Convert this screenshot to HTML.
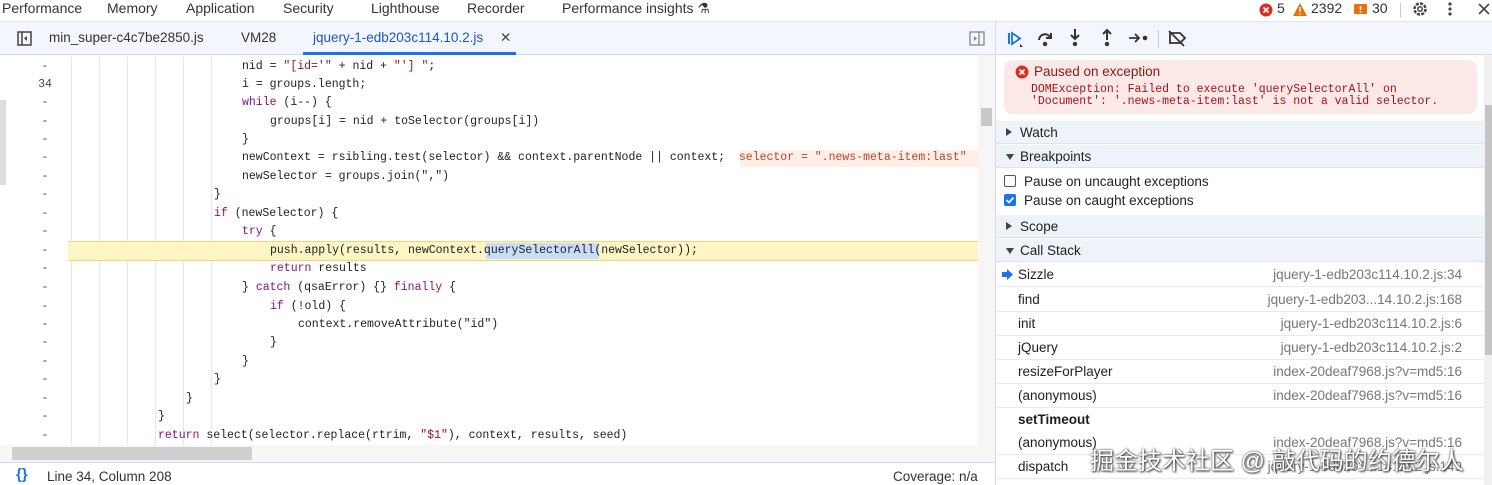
<!DOCTYPE html>
<html><head><meta charset="utf-8"><style>
*{margin:0;padding:0;box-sizing:border-box}
body{width:1492px;height:485px;overflow:hidden;background:#fff;font-family:"Liberation Sans","Noto Sans CJK SC",sans-serif;font-size:13px;color:#1f1f1f;position:relative}
.abs{position:absolute}
#top{left:0;top:0;width:1492px;height:22px;background:#fff;border-bottom:1px solid #e0e3e8}
#top span{position:absolute;top:0;font-size:14px;color:#333}
#tabs{left:0;top:22px;width:995px;height:33px;background:#f3f6fc;border-bottom:1px solid #d6dbe3}
#tabs span{position:absolute;top:8px;font-size:13.5px;color:#333}
#dbg{left:995px;top:22px;width:497px;height:33px;background:#f3f6fc;border-bottom:1px solid #d6dbe3;border-left:1px solid #d6dbe3}
#editor{left:0;top:57px;width:978px;height:388px;overflow:hidden}
.ln{position:absolute;left:20px;width:50px;text-align:center;font-family:"Liberation Mono",monospace;font-size:11.5px;color:#444}
.code{position:absolute;font-family:"Liberation Mono",monospace;font-size:11.5px;color:#222;white-space:pre}
.guide{position:absolute;top:0;width:1px;height:390px;background:#e6e6e6}
.kw{color:#881280}.str{color:#a31515}
#right{left:995px;top:55px;width:497px;height:430px;border-left:1px solid #d6dbe3;background:#fff}
.sec{position:absolute;left:0;width:488px;height:23px;background:#eef2f9;border-bottom:1px solid #dde3ee;font-size:13.5px;padding:4px 0 0 24px}
.tri{position:absolute;left:10px;top:8px;width:0;height:0}
.row{position:absolute;left:0;width:488px;height:24px;border-bottom:1px solid #e8eaed;font-size:13.5px}
.row .n{position:absolute;left:22px;top:4px}
.row .f{position:absolute;right:22px;top:4px;color:#777}
</style></head><body>
<div id="top" class="abs">
<span style="left:2px">Performance</span><span style="left:107px">Memory</span><span style="left:186px">Application</span><span style="left:283px">Security</span><span style="left:371px">Lighthouse</span><span style="left:467px">Recorder</span><span style="left:562px">Performance insights ⚗</span>
<svg class="abs" style="left:1259px;top:3px" width="14" height="14"><circle cx="7" cy="7" r="6.5" fill="#d93025"/><path d="M4.5 4.5l5 5M9.5 4.5l-5 5" stroke="#fff" stroke-width="1.6"/></svg>
<span style="left:1277px">5</span>
<svg class="abs" style="left:1293px;top:3px" width="14" height="13"><path d="M7 0L14 13H0z" fill="#e8710a"/><path d="M7 4v5M7 10.5v1.2" stroke="#fff" stroke-width="1.5"/></svg>
<span style="left:1311px">2392</span>
<svg class="abs" style="left:1354px;top:4px" width="13" height="12"><rect width="13" height="10" rx="1" fill="#e8710a"/><path d="M6.5 2v4M6.5 7v1.5" stroke="#fff" stroke-width="1.5"/></svg>
<span style="left:1372px">30</span>
<div class="abs" style="left:1400px;top:2px;width:1px;height:16px;background:#ccc"></div>
<svg class="abs" style="left:1411px;top:0px" width="18" height="18"><circle cx="9" cy="9" r="5.5" fill="none" stroke="#444" stroke-width="2.5" stroke-dasharray="3 1.3"/><circle cx="9" cy="9" r="2.2" fill="none" stroke="#444" stroke-width="1.5"/></svg>
<svg class="abs" style="left:1447px;top:1px" width="6" height="16"><circle cx="3" cy="3" r="1.6" fill="#444"/><circle cx="3" cy="8" r="1.6" fill="#444"/><circle cx="3" cy="13" r="1.6" fill="#444"/></svg>
<svg class="abs" style="left:1478px;top:3px" width="12" height="12"><path d="M1 1l10 10M11 1L1 11" stroke="#444" stroke-width="1.6"/></svg>
</div>
<div id="tabs" class="abs">
<svg class="abs" style="left:17px;top:9px" width="15" height="15"><rect x="1" y="1" width="13" height="13" fill="none" stroke="#444" stroke-width="1.5"/><path d="M5 1v13" stroke="#444" stroke-width="1.5"/><path d="M10 5l-3 2.5 3 2.5z" fill="#444"/></svg>
<span style="left:49px">min_super-c4c7be2850.js</span>
<span style="left:241px">VM28</span>
<span style="left:313px;color:#1a57c9">jquery-1-edb203c114.10.2.js</span>
<span style="left:500px;color:#444">✕</span>
<div class="abs" style="left:303px;top:30px;width:213px;height:3px;background:#1a73e8"></div>
<svg class="abs" style="left:969px;top:9px" width="16" height="15"><rect x="1" y="1" width="14" height="13" fill="none" stroke="#888" stroke-width="1.3"/><path d="M10 1v13" stroke="#888" stroke-width="1.3"/><path d="M5 5l3 2.5-3 2.5z" fill="#888"/></svg>
</div>
<div id="dbg" class="abs">
<svg class="abs" style="left:10px;top:8px" width="18" height="18"><path d="M3 3v11" stroke="#1a73e8" stroke-width="2"/><path d="M6 3l8 5.5-8 5.5z" fill="none" stroke="#1a73e8" stroke-width="1.8"/><path d="M14 14l3 3h-3z" fill="#333"/></svg>
<svg class="abs" style="left:40px;top:8px" width="18" height="18"><path d="M3 10a6 6 0 0 1 11-3" fill="none" stroke="#333" stroke-width="2"/><path d="M15 3v5h-5" fill="none" stroke="#333" stroke-width="2"/><circle cx="9" cy="14" r="2.2" fill="#333"/></svg>
<svg class="abs" style="left:72px;top:6px" width="14" height="20"><path d="M7 1v10M3 7l4 4 4-4" fill="none" stroke="#333" stroke-width="2"/><circle cx="7" cy="16" r="2.2" fill="#333"/></svg>
<svg class="abs" style="left:104px;top:6px" width="14" height="20"><path d="M7 12V2M3 6l4-4 4 4" fill="none" stroke="#333" stroke-width="2"/><circle cx="7" cy="16" r="2.2" fill="#333"/></svg>
<svg class="abs" style="left:132px;top:8px" width="22" height="16"><path d="M1 8h10M7 4l4 4-4 4" fill="none" stroke="#333" stroke-width="1.8"/><circle cx="17" cy="8" r="2.3" fill="#333"/></svg>
<div class="abs" style="left:162px;top:8px;width:1px;height:18px;background:#ccc"></div>
<svg class="abs" style="left:171px;top:7px" width="20" height="18"><path d="M3 4h10l5 5-5 5H3z" fill="none" stroke="#333" stroke-width="1.8"/><path d="M2 2l15 15" stroke="#333" stroke-width="1.8"/></svg>
</div>
<div id="editor" class="abs">
<div class="guide" style="left:71px"></div><div class="guide" style="left:99px"></div><div class="guide" style="left:127px"></div><div class="guide" style="left:155px"></div><div class="guide" style="left:183px"></div><div class="guide" style="left:211px"></div>
<div class="abs" style="left:68px;top:184px;width:910px;height:20px;background:#fdf6c4;border-top:1px solid #f0d878;border-bottom:1px solid #f0d878"></div>
<div class="abs" style="left:486px;top:186px;width:113px;height:16px;background:#c9ddf7"></div>
<div class="abs" style="left:740px;top:93px;width:240px;height:17px;background:#fdeee6"></div>
<div class="ln" style="top:3px">-</div><div class="code" style="left:242px;top:3px">nid = <span class="str">"[id='"</span> + nid + <span class="str">"'] "</span>;</div>
<div class="ln" style="top:21px">34</div><div class="code" style="left:242px;top:21px">i = groups.length;</div>
<div class="ln" style="top:39px">-</div><div class="code" style="left:242px;top:39px"><span class="kw">while</span> (i--) {</div>
<div class="ln" style="top:58px">-</div><div class="code" style="left:270px;top:58px">groups[i] = nid + toSelector(groups[i])</div>
<div class="ln" style="top:76px">-</div><div class="code" style="left:242px;top:76px">}</div>
<div class="ln" style="top:94px">-</div><div class="code" style="left:242px;top:94px">newContext = rsibling.test(selector) &amp;&amp; context.parentNode || context;  <span style="color:#b5462a">selector = ".news-meta-item:last"</span></div>
<div class="ln" style="top:113px">-</div><div class="code" style="left:242px;top:113px">newSelector = groups.join(",")</div>
<div class="ln" style="top:131px">-</div><div class="code" style="left:214px;top:131px">}</div>
<div class="ln" style="top:150px">-</div><div class="code" style="left:214px;top:150px"><span class="kw">if</span> (newSelector) {</div>
<div class="ln" style="top:168px">-</div><div class="code" style="left:242px;top:168px"><span class="kw">try</span> {</div>
<div class="ln" style="top:187px">-</div><div class="code" style="left:270px;top:187px">push.apply(results, newContext.querySelectorAll(newSelector));</div>
<div class="ln" style="top:205px">-</div><div class="code" style="left:270px;top:205px"><span class="kw">return</span> results</div>
<div class="ln" style="top:224px">-</div><div class="code" style="left:242px;top:224px">} <span class="kw">catch</span> (qsaError) {} <span class="kw">finally</span> {</div>
<div class="ln" style="top:243px">-</div><div class="code" style="left:270px;top:243px"><span class="kw">if</span> (!old) {</div>
<div class="ln" style="top:261px">-</div><div class="code" style="left:298px;top:261px">context.removeAttribute("id")</div>
<div class="ln" style="top:279px">-</div><div class="code" style="left:270px;top:279px">}</div>
<div class="ln" style="top:298px">-</div><div class="code" style="left:242px;top:298px">}</div>
<div class="ln" style="top:316px">-</div><div class="code" style="left:214px;top:316px">}</div>
<div class="ln" style="top:335px">-</div><div class="code" style="left:186px;top:335px">}</div>
<div class="ln" style="top:353px">-</div><div class="code" style="left:158px;top:353px">}</div>
<div class="ln" style="top:372px">-</div><div class="code" style="left:158px;top:372px"><span class="kw">return</span> select(selector.replace(rtrim, <span class="str">"$1"</span>), context, results, seed)</div>
</div>
<div class="abs" style="left:0;top:100px;width:6px;height:85px;background:#ddd"></div>
<div class="abs" style="left:978px;top:55px;width:17px;height:390px;background:#f6f6f6"></div>
<div class="abs" style="left:981px;top:108px;width:11px;height:18px;background:#c8c8c8"></div>
<div class="abs" style="left:0;top:445px;width:995px;height:17px;background:#f6f6f6"></div>
<div class="abs" style="left:12px;top:447px;width:240px;height:13px;background:#cfcfcf"></div>
<div class="abs" style="left:0;top:462px;width:995px;height:23px;background:#fff;border-top:1px solid #d6dbe3"></div>
<div class="abs" style="left:16px;top:466px;font-size:15px;color:#1a73e8;font-weight:bold">{}</div>
<div class="abs" style="left:47px;top:469px;font-size:13.5px;color:#333">Line 34, Column 208</div>
<div class="abs" style="left:893px;top:469px;font-size:13.5px;color:#333">Coverage: n/a</div>
<div id="right" class="abs">
<div class="abs" style="left:8px;top:5px;width:473px;height:54px;background:#fce8e6;border-radius:9px"></div>
<svg class="abs" style="left:19px;top:10px" width="14" height="14"><circle cx="7" cy="7" r="6.5" fill="#d93025"/><path d="M4.5 4.5l5 5M9.5 4.5l-5 5" stroke="#fff" stroke-width="1.6"/></svg>
<div class="abs" style="left:38px;top:9px;font-size:13.5px;color:#8a1a12">Paused on exception</div>
<div class="abs" style="left:35px;top:29px;font-family:'Liberation Mono',monospace;font-size:11.5px;color:#a31515;line-height:12px;white-space:pre">DOMException: Failed to execute 'querySelectorAll' on
'Document': '.news-meta-item:last' is not a valid selector.</div>
<div class="sec" style="top:66px"><span class="tri" style="border-left:6px solid #444;border-top:4px solid transparent;border-bottom:4px solid transparent;top:7px"></span>Watch</div>
<div class="sec" style="top:90px"><span class="tri" style="border-top:6px solid #444;border-left:4px solid transparent;border-right:4px solid transparent;top:9px"></span>Breakpoints</div>
<div class="abs" style="left:8px;top:120px;width:12px;height:12px;border:1px solid #555;border-radius:2px"></div>
<div class="abs" style="left:28px;top:119px;font-size:13.5px">Pause on uncaught exceptions</div>
<div class="abs" style="left:8px;top:139px;width:12px;height:12px;background:#1a73e8;border-radius:2px"><svg width="12" height="12" style="display:block"><path d="M2.5 6l2.5 2.5 4.5-5" fill="none" stroke="#fff" stroke-width="1.7"/></svg></div>
<div class="abs" style="left:28px;top:138px;font-size:13.5px">Pause on caught exceptions</div>
<div class="sec" style="top:160px"><span class="tri" style="border-left:6px solid #444;border-top:4px solid transparent;border-bottom:4px solid transparent;top:7px"></span>Scope</div>
<div class="sec" style="top:184px"><span class="tri" style="border-top:6px solid #444;border-left:4px solid transparent;border-right:4px solid transparent;top:9px"></span>Call Stack</div>
<div class="row" style="top:208px"><svg class="abs" style="left:6px;top:6px" width="11" height="11"><path d="M0 3h5V0l6 5.5-6 5.5V8H0z" fill="#1a73e8"/></svg><span class="n">Sizzle</span><span class="f">jquery-1-edb203c114.10.2.js:34</span></div>
<div class="row" style="top:233px"><span class="n">find</span><span class="f">jquery-1-edb203...14.10.2.js:168</span></div>
<div class="row" style="top:257px"><span class="n">init</span><span class="f">jquery-1-edb203c114.10.2.js:6</span></div>
<div class="row" style="top:281px"><span class="n">jQuery</span><span class="f">jquery-1-edb203c114.10.2.js:2</span></div>
<div class="row" style="top:305px"><span class="n">resizeForPlayer</span><span class="f">index-20deaf7968.js?v=md5:16</span></div>
<div class="row" style="top:329px"><span class="n">(anonymous)</span><span class="f">index-20deaf7968.js?v=md5:16</span></div>
<div class="row" style="top:353px;border:none"><span class="n" style="font-weight:bold">setTimeout</span></div>
<div class="row" style="top:376px"><span class="n">(anonymous)</span><span class="f">index-20deaf7968.js?v=md5:16</span></div>
<div class="row" style="top:400px"><span class="n">dispatch</span><span class="f">jquery-1-edb203...14.10.2.js:149</span></div>
<div class="abs" style="left:488px;top:0;width:9px;height:430px;background:#f1f1f1"></div>
<div class="abs" style="left:489px;top:50px;width:7px;height:250px;background:#c4c4c4"></div>
</div>
<div class="abs" style="left:1090px;top:441px;font-size:24px;color:#fff;text-shadow:0 0 2px #333,1px 1px 2px #333;white-space:nowrap">掘金技术社区 @ 敲代码的约德尔人</div>
</body></html>
